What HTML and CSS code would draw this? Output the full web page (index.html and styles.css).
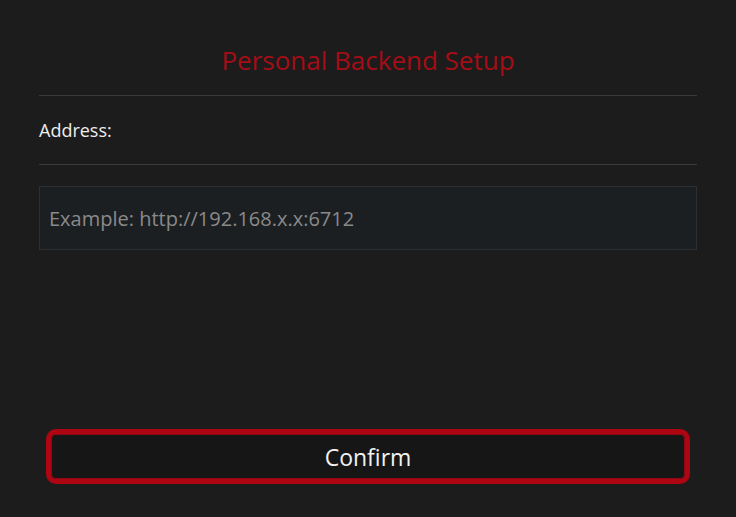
FILE: index.html
```html
<!DOCTYPE html>
<html>
<head>
<meta charset="utf-8">
<link rel="stylesheet" href="styles.css">
</head>
<body>
<div class="page">
  <h1 class="title">Personal Backend Setup</h1>
  <div class="rule"></div>
  <div class="label">Address:</div>
  <div class="rule"></div>
  <input class="field" type="text" placeholder="Example: http://192.168.x.x:6712">
  <div class="spacer"></div>
  <div class="actions">
    <button class="confirm">Confirm</button>
  </div>
</div>
</body>
</html>
```

FILE: styles.css
```css
html, body {
  margin: 0;
  padding: 0;
  background: #1c1c1c;
  height: 100%;
}
body {
  font-family: "Open Sans", "Noto Sans", sans-serif;
  color: #eeeeee;
}
.page {
  display: flex;
  flex-direction: column;
  padding: 0 39px;
  height: 517px;
  box-sizing: border-box;
}
.title {
  margin: 0;
  padding-top: 42px;
  height: 95px;
  box-sizing: border-box;
  text-align: center;
  font-weight: 400;
  font-size: 26px;
  line-height: 36px;
  color: #a50d16;
}
.rule {
  height: 1px;
  background: #3a3a3a;
}
.label {
  height: 68px;
  box-sizing: border-box;
  padding-top: 22px;
  font-size: 18px;
  line-height: 24px;
  color: #eeeeee;
}
.field {
  margin-top: 21px;
  height: 64px;
  box-sizing: border-box;
  background: #1b1f22;
  border: 1px solid #2b3034;
  padding: 0 9px;
  font-family: inherit;
  font-size: 20px;
  color: #eeeeee;
  outline: none;
}
.field::placeholder {
  color: #8a8a8a;
}
.spacer {
  flex: 1;
}
.actions {
  padding: 0 7px 33px 7px;
}
.confirm {
  display: block;
  width: 644px;
  height: 55px;
  box-sizing: border-box;
  border: 5px solid #ad0612;
  border-radius: 10px;
  box-shadow: inset 0 0 0 1px #8a0a12;
  background: #161616;
  color: #f2f2f2;
  font-family: inherit;
  font-size: 23px;
  line-height: 30px;
  padding: 0;
}
```
